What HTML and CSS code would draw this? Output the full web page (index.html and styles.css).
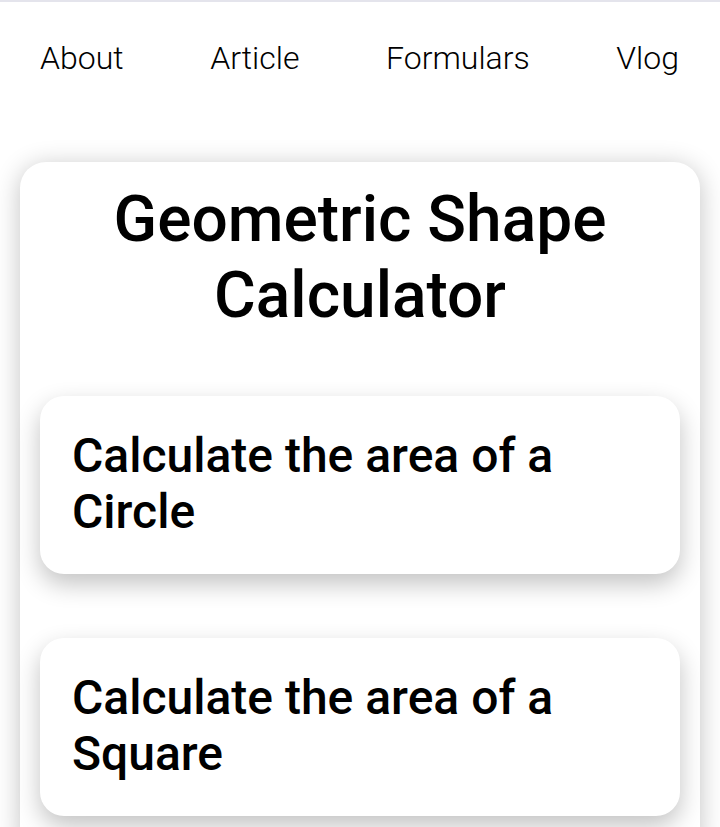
FILE: index.html
```html
<!DOCTYPE html>
<html lang="en">
<head>
<meta charset="utf-8">
<title>Geometric Shape Calculator</title>
<link rel="stylesheet" href="styles.css">
</head>
<body>
<nav class="nav">
  <a class="nav-link" href="#">About</a>
  <a class="nav-link" href="#">Article</a>
  <a class="nav-link" href="#">Formulars</a>
  <a class="nav-link" href="#">Vlog</a>
</nav>
<main class="panel">
  <h1 class="title">Geometric Shape Calculator</h1>
  <div class="options">
    <a class="option" href="#">Calculate the area of a Circle</a>
    <a class="option" href="#">Calculate the area of a Square</a>
  </div>
</main>
</body>
</html>
```

FILE: styles.css
```css
html, body {
  margin: 0;
  padding: 0;
}
body {
  background: #ffffff;
  border-top: 2px solid #e4e4ec;
  font-family: Roboto, "Liberation Sans", sans-serif;
  color: #000;
  overflow: hidden;
  height: 825px;
}
.nav {
  display: flex;
  justify-content: space-between;
  padding: 37px 41px 0 40px;
}
.nav-link {
  font-size: 32px;
  line-height: 38px;
  font-weight: 300;
  color: #000;
  text-decoration: none;
}
.panel {
  margin: 85px 20px 0;
  background: #fff;
  border-radius: 26px;
  box-shadow: 0 4px 26px rgba(0, 0, 0, 0.24);
  padding: 20px 20px 40px;
}
.title {
  margin: 0;
  text-align: center;
  font-size: 64px;
  line-height: 76px;
  font-weight: 500;
}
.options {
  display: flex;
  flex-direction: column;
  gap: 64px;
  margin-top: 62px;
}
.option {
  display: block;
  background: #fff;
  border-radius: 24px;
  padding: 32px 32px 34px;
  font-size: 48px;
  line-height: 56px;
  font-weight: 500;
  color: #000;
  text-decoration: none;
  box-shadow: 0 10px 24px rgba(0, 0, 0, 0.24);
}
```
